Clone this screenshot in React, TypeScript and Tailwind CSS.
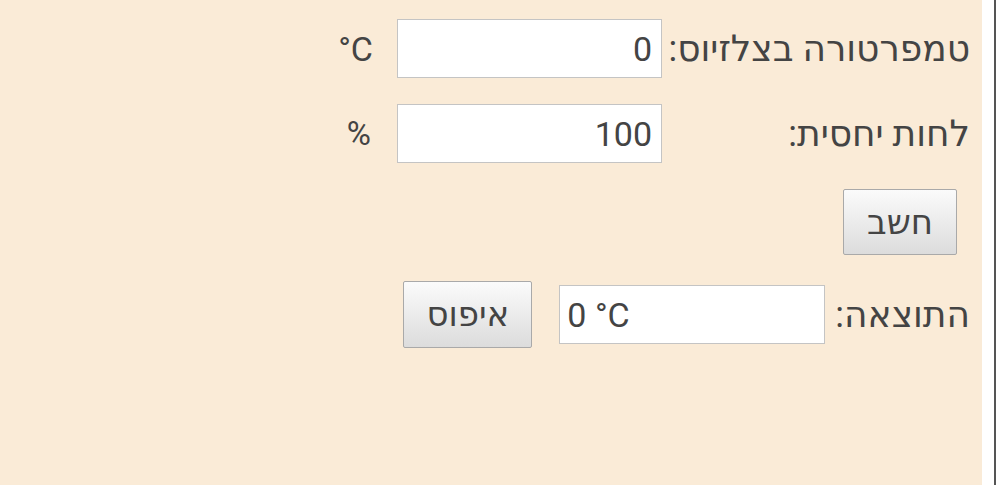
import { useState } from 'react'

const font = { fontFamily: 'Roboto, "DejaVu Sans", sans-serif' }

export default function App() {
  const [temp, setTemp] = useState('0')
  const [hum, setHum] = useState('100')
  const [result, setResult] = useState('0 °C')

  const calc = () => {
    const t = parseFloat(temp)
    const rh = parseFloat(hum)
    if (isNaN(t) || isNaN(rh) || rh <= 0) { setResult(''); return }
    const a = 17.27, b = 237.7
    const g = (a * t) / (b + t) + Math.log(rh / 100)
    const dp = (b * g) / (a - g)
    setResult(`${Math.round(dp * 10) / 10} °C`)
  }

  const reset = () => { setTemp('0'); setHum('100'); setResult('0 °C') }

  return (
    <div className="flex h-[485px] w-[997px] overflow-hidden bg-white" style={font}>
      <div dir="rtl" className="h-full w-[982px] bg-[#faebd7] pt-[19px] pr-[12px] text-[36px] text-[#444]">
        <div className="flex items-center gap-[6px]">
          <div className="w-[302px] leading-none">טמפרטורה בצלזיוס:</div>
          <input value={temp} onChange={e => setTemp(e.target.value)} className="h-[59px] w-[265px] border border-[#c4c4c4] bg-white px-[9px] text-[34px] text-[#444] outline-none" />
          <div className="mr-[18px] text-[34px] leading-none" dir="ltr">°C</div>
        </div>
        <div className="mt-[26px] flex items-center gap-[6px]">
          <div className="w-[302px] leading-none">לחות יחסית:</div>
          <input value={hum} onChange={e => setHum(e.target.value)} className="h-[59px] w-[265px] border border-[#c4c4c4] bg-white px-[9px] text-[34px] text-[#444] outline-none" />
          <div className="mr-[20px] text-[33px] leading-none">%</div>
        </div>
        <div className="mt-[26px] flex pr-[13px]">
          <button onClick={calc} className="h-[66px] w-[114px] rounded-[2px] border border-[#a9a9a9] bg-gradient-to-b from-[#fbfbfb] to-[#dcdcdc] text-[34px] text-[#444]">חשב</button>
        </div>
        <div className="mt-[26px] flex items-center">
          <div className="leading-none">התוצאה:</div>
          <input readOnly dir="ltr" value={result} className="mr-[10px] h-[59px] w-[266px] border border-[#c4c4c4] bg-white px-[7px] text-[34px] text-[#444] outline-none" />
          <button onClick={reset} className="mr-[27px] h-[67px] w-[129px] rounded-[2px] border border-[#a9a9a9] bg-gradient-to-b from-[#fbfbfb] to-[#dcdcdc] text-[34px] text-[#444]">איפוס</button>
        </div>
      </div>
      <div className="ml-[12px] h-full w-[2px] bg-[#555]" />
    </div>
  )
}
